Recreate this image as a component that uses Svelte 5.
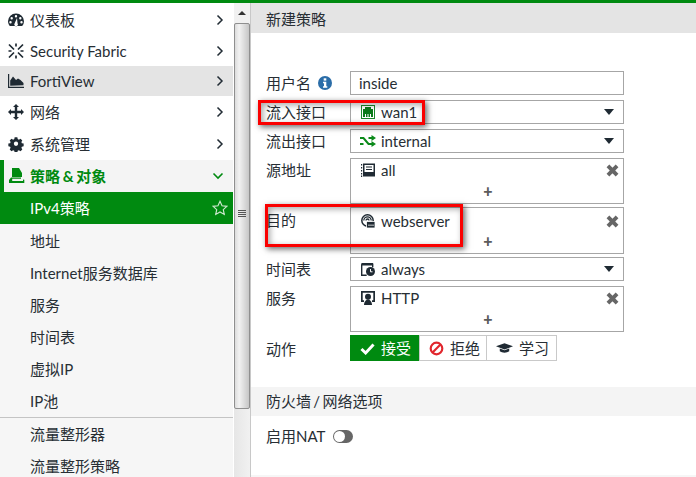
<script>
  const top = [
    { label: '仪表板', icon: 'gauge' },
    { label: 'Security Fabric', icon: 'fabric' },
    { label: 'FortiView', icon: 'chart', hover: true },
    { label: '网络', icon: 'move' },
    { label: '系统管理', icon: 'cog' }
  ];
  const sub1 = ['地址', 'Internet服务数据库', '服务', '时间表', '虚拟IP', 'IP池'];
  const sub2 = ['流量整形器', '流量整形策略'];
</script>

{#snippet menuIcon(name)}
  <svg class="micon" viewBox="0 0 16 16" width="16" height="16">
    {#if name === 'gauge'}
      <path fill="#1f2a33" fill-rule="evenodd" d="M8 1.500a7.800 7.800 0 0 0-8 7.700c0 1.900.7 3.500 1.800 4.800h12.400A7.300 7.300 0 0 0 16 9.200 7.800 7.800 0 0 0 8 1.500zM8 3a1.200 1.200 0 1 1 0 2.400A1.200 1.200 0 0 1 8 3zM3.700 5a1.200 1.200 0 1 1 0 2.400 1.200 1.200 0 0 1 0-2.400zm8.600 0a1.200 1.200 0 1 1 0 2.400 1.200 1.200 0 0 1 0-2.400zM2.500 9.100a1.200 1.200 0 1 1 0 2.400 1.200 1.200 0 0 1 0-2.400zm11 0a1.200 1.200 0 1 1 0 2.400 1.200 1.200 0 0 1 0-2.400zM9 6l.5 5.200a1.800 1.800 0 1 1-2.800 0z"/>
    {:else if name === 'fabric'}
      <path fill="none" stroke="#1f2a33" stroke-width="1.700" d="M1 1.500l5 5M15 1.500l-5 5M1 14.500l5-5M15 14.500l-5-5M8 .5v3M8 12.500v3M.5 8h3M12.500 8h3"/>
    {:else if name === 'chart'}
      <path fill="#1f2a33" d="M0 1h1.200v12.800H16V15H0z"/>
      <path fill="#1f2a33" d="M2.200 12.800V7.500L5 3.500l3 3.500 2-1.500 2.500 1.500 3 3v2.300z"/>
    {:else if name === 'move'}
      <path fill="#1f2a33" d="M8 0l3 3H9.200v3.800H13V5l3 3-3 3V9.200H9.200V13H11l-3 3-3-3h1.800V9.200H3V11L0 8l3-3v1.800h3.800V3H5z"/>
    {:else if name === 'cog'}
      <path fill="#1f2a33" fill-rule="evenodd" d="M6.500 1h3l.4 2 1.300.6 1.800-1.100 2 2-1 1.800.5 1.300 2 .4v3l-2 .4-.5 1.300 1 1.800-2 2-1.800-1.100-1.300.6-.4 2h-3l-.4-2-1.300-.6-1.800 1.100-2-2 1-1.800-.5-1.300-2-.4v-3l2-.4.5-1.300-1-1.800 2-2 1.800 1.100 1.300-.6zM8 5.800a2.400 2.400 0 1 0 0 4.800 2.400 2.400 0 0 0 0-4.800z" transform="translate(.8 .4) scale(.9)"/>
    {/if}
  </svg>
{/snippet}

{#snippet chevron()}
  <svg class="chev" viewBox="0 0 8 12" width="8" height="12"><path d="M1.500 1.500L6 6l-4.500 4.500" fill="none" stroke="#222c35" stroke-width="1.500"/></svg>
{/snippet}

{#snippet caret()}
  <span class="caret"></span>
{/snippet}

{#snippet cross()}
  <svg class="cross" viewBox="0 0 12 12" width="13" height="13"><path d="M1.800 1.800l8.400 8.400M10.200 1.800l-8.400 8.400" stroke="#666" stroke-width="3.600" fill="none"/></svg>
{/snippet}

<div class="page">
  <div class="topbar"></div>
  <div class="main">
    <nav class="side">
      {#each top as item, i}
        <div class="item" class:first={i === 0} class:slim={i === 1 || i === 2} class:hover={item.hover}>
          {@render menuIcon(item.icon)}
          <span class="lbl">{item.label}</span>
          {@render chevron()}
        </div>
      {/each}
      <div class="item group">
        <svg class="micon" viewBox="0 0 16 16" width="16" height="16">
          <path fill="#008a10" d="M3 0h7l3 5v4H3z"/>
          <path fill="#008a10" d="M2 9.500h10v1.200H3.200V13H14v-1.500l1.300.2V15H0v-3z"/>
        </svg>
        <span class="lbl">策略 &amp; 对象</span>
        <svg class="chev" viewBox="0 0 12 8" width="12" height="8"><path d="M1.500 1.500L6 6l4.500-4.500" fill="none" stroke="#008a10" stroke-width="1.600"/></svg>
      </div>
      <div class="item active">
        <span class="lbl">IPv4策略</span>
        <svg class="star" viewBox="0 0 18 18" width="16" height="16"><path d="M9 1.500l2.300 5 5.400.6-4 3.700 1.100 5.400L9 13.500l-4.800 2.700 1.100-5.400-4-3.700 5.400-.6z" fill="none" stroke="#cfe9d0" stroke-width="1.300"/></svg>
      </div>
      <div class="sub">
        {#each sub1 as s}<div class="subitem">{s}</div>{/each}
        <div class="divider"></div>
        {#each sub2 as s}<div class="subitem">{s}</div>{/each}
      </div>
    </nav>

    <div class="scroll">
      <div class="sb-up"><span></span></div>
      <div class="sb-thumb"><div class="grip"><i></i><i></i><i></i><i></i></div></div>
    </div>

    <section class="content">
      <header class="head">新建策略</header>
      <div class="form">
        <div class="row r-user">
          <div class="label">用户名
            <svg class="info" viewBox="0 0 14 14" width="14" height="14"><circle cx="7" cy="7" r="7" fill="#2b6da8"/><rect x="5.700" y="2.300" width="2.600" height="2.300" fill="#fff"/><path d="M5 5.800h3.300v4.400h1v1.500H5v-1.500h1V7.300H5z" fill="#fff"/></svg>
          </div>
          <div class="box single plain">inside</div>
        </div>
        <div class="row r-in">
          <div class="label">流入接口</div>
          <div class="box single">
            <svg class="ico" viewBox="0 0 14 14" width="14" height="14"><rect x=".5" y=".5" width="13" height="13" fill="#fff" stroke="#1c8a2a"/><path fill="#0b7a1a" d="M2 4h2V2h6v2h2v8H2z"/><path stroke="#fff" d="M4.500 9v3M7 9v3M9.500 9v3"/></svg>
            <span>wan1</span>{@render caret()}
          </div>
        </div>
        <div class="row r-out">
          <div class="label">流出接口</div>
          <div class="box single">
            <svg class="ico wide" viewBox="0 0 16 12" width="16" height="12"><path d="M0 3h3.500l5 6H12M0 9h3.500M8.500 3H12" fill="none" stroke="#0b8a1a" stroke-width="2"/><path d="M11.500 0L16 3l-4.500 3zM11.500 6L16 9l-4.500 3z" fill="#0b8a1a"/></svg>
            <span>internal</span>{@render caret()}
          </div>
        </div>
        <div class="row r-src">
          <div class="label top">源地址</div>
          <div class="box multi">
            <div class="entry">
              <svg class="ico" viewBox="0 0 14 14" width="14" height="14"><rect x="2" y=".5" width="12" height="13" fill="#1f2a33"/><path d="M0 1h1.200v1.500H0zM0 4h1.200v1.500H0zM0 7h1.200v1.500H0zM0 10h1.200v1.500H0zM0 12.500h1.200V14H0z" fill="#1f2a33"/><path d="M3.500 2h9v7h-9z" fill="#fff"/><path d="M5 3.500h6v1H5zM5 6h6v1H5z" fill="#1f2a33"/></svg>
              <span>all</span>{@render cross()}
            </div>
            <div class="plus">+</div>
          </div>
        </div>
        <div class="row r-dst">
          <div class="label top">目的</div>
          <div class="box multi">
            <div class="entry">
              <svg class="ico" viewBox="0 0 14 14" width="14" height="14"><circle cx="6.500" cy="6.500" r="5.700" fill="none" stroke="#1f2a33" stroke-width="1.500"/><path d="M2.800 6.500a3.700 3.700 0 0 1 7.400 0M5 6.500a1.500 1.500 0 0 1 3 0" fill="none" stroke="#1f2a33" stroke-width="1.300"/><rect x="5.500" y="7.500" width="8.500" height="6.500" fill="#1f2a33" stroke="#fff" stroke-width=".8"/><path d="M7.500 10.500h1V12h-1zM9.500 10.500h1V12h-1zM11.500 10.500h1V12h-1z" fill="#fff"/></svg>
              <span>webserver</span>{@render cross()}
            </div>
            <div class="plus">+</div>
          </div>
        </div>
        <div class="row r-time">
          <div class="label">时间表</div>
          <div class="box single">
            <svg class="ico" viewBox="0 0 14 14" width="14" height="14"><path d="M.7 2.200h11v3M.7 2.200v11h5" fill="none" stroke="#1f2a33" stroke-width="1.400"/><rect x=".5" y="1" width="11.500" height="2.500" fill="#1f2a33"/><circle cx="9.500" cy="9.500" r="4.500" fill="#1f2a33"/><path d="M9.500 7v2.800h2" fill="none" stroke="#fff"/></svg>
            <span>always</span>{@render caret()}
          </div>
        </div>
        <div class="row r-svc">
          <div class="label top">服务</div>
          <div class="box multi">
            <div class="entry">
              <svg class="ico" viewBox="0 0 14 14" width="14" height="14"><path fill="#1f2a33" fill-rule="evenodd" d="M0 0h14v11h-3V9.300h1.300V1.700H1.700v7.600H3V11H0z"/><circle cx="7" cy="5.800" r="3" fill="#1f2a33"/><path fill="#1f2a33" d="M3 14c0-3 1.800-5.500 4-5.500s4 2.500 4 5.500z"/></svg>
              <span>HTTP</span>{@render cross()}
            </div>
            <div class="plus">+</div>
          </div>
        </div>
        <div class="row r-act">
          <div class="label">动作</div>
          <div class="seg">
            <div class="btn on">
              <svg viewBox="0 0 16 14" width="15" height="13"><path d="M1.500 7.500l4.500 4.300L14.500 2.800" fill="none" stroke="#fff" stroke-width="3.200"/></svg>
              接受
            </div>
            <div class="btn deny">
              <svg viewBox="0 0 16 16" width="15" height="15"><circle cx="8" cy="8" r="6.200" fill="none" stroke="#e1262d" stroke-width="2.300"/><path d="M3.800 12.200l8.400-8.400" stroke="#e1262d" stroke-width="2.300"/></svg>
              拒绝
            </div>
            <div class="btn learn">
              <svg viewBox="0 0 18 12" width="17" height="12"><path d="M9 1L0 4.200 9 7.500l9-3.300z" fill="#1f2a33"/><path d="M4 6.500v3c2.500 2 7.500 2 10 0v-3L9 8.500z" fill="#1f2a33"/></svg>
              学习
            </div>
          </div>
        </div>
      </div>
      <div class="section">防火墙 / 网络选项</div>
      <div class="nat">
        <span>启用NAT</span>
        <span class="toggle"><i></i></span>
      </div>
      <div class="foot"></div>
    </section>
  </div>

  <div class="mark m1"></div>
  <div class="mark m2"></div>
</div>

<style>
  :global(body) { margin: 0; }
  .page {
    position: relative;
    width: 696px;
    height: 477px;
    overflow: hidden;
    background: #fff;
    color: #272e34;
    font: 15px/20px Lato, "Noto Sans CJK SC", sans-serif;
  }
  .topbar { height: 3px; background: #008a10; }
  .main { display: flex; height: 474px; }

  .side { width: 233px; flex: none; background: #fff; }
  .item {
    display: flex;
    align-items: center;
    height: 32px;
    padding: 0 9px 0 8px;
    box-sizing: border-box;
  }
  .item.first { height: 33px; }
  .item.slim { height: 30px; }
  .item.hover { background: #e4e4e4; }
  .micon { flex: none; margin-right: 6px; }
  .lbl { flex: 1; white-space: nowrap; }
  .chev { flex: none; }
  .item.group {
    background: #f4f4f4;
    border-left: 4px solid #008a10;
    padding-left: 5px;
    padding-right: 9px;
    color: #008a10;
    font-weight: 700;
    word-spacing: -1px;
  }
  .item.group .micon { margin-right: 5px; }
  .item.active {
    background: #008a10;
    color: #fff;
    padding-left: 30px;
    padding-right: 5px;
  }
  .sub { background: #f6f6f6; padding-top: 1px; height: 253px; box-sizing: border-box; }
  .subitem { height: 32px; line-height: 32px; padding-left: 30px; white-space: nowrap; }
  .divider { height: 1px; background: #c4c4c4; }

  .scroll {
    width: 16px;
    flex: none;
    background: linear-gradient(90deg, #e6e6e6, #f1f1f1);
    margin-left: 1px;
  }
  .sb-up { height: 20px; background: #f1f1f1; display: flex; align-items: center; justify-content: center; }
  .sb-up span { border: 4px solid transparent; border-bottom: 4px solid #333; border-top: 0; }
  .sb-thumb {
    height: 386px;
    box-sizing: border-box;
    border: 1px solid #8f8f8f;
    border-radius: 2px;
    background: linear-gradient(90deg, #dcdcdc, #f2f2f2 30%, #c6c6c6);
    display: flex;
    align-items: center;
    justify-content: center;
  }
  .grip { display: flex; flex-direction: column; gap: 1px; margin-top: -6px; }
  .grip i { display: block; width: 8px; height: 1px; background: #555; }

  .content {
    flex: 1;
    border-left: 1px solid #c8c8c8;
    display: flex;
    flex-direction: column;
    min-width: 0;
  }
  .head {
    height: 30px;
    line-height: 33px;
    background: #e4e4e4;
    padding-left: 15px;
    flex: none;
  }
  .form { padding: 38px 0 0 15px; }
  .row { display: flex; }
  .label {
    width: 84px;
    flex: none;
    display: flex;
    align-items: center;
    gap: 7px;
  }
  .label.top { align-items: flex-start; padding-top: 2px; }
  .box {
    width: 274px;
    box-sizing: border-box;
    border: 1px solid #a6a6a6;
    background: #fff;
  }
  .single {
    height: 24px;
    display: flex;
    align-items: center;
    padding: 0 10px;
    gap: 6px;
  }
  .single.plain { padding-left: 8px; }
  .single > span:not(.caret) { flex: 1; }
  .ico { flex: none; }
  .ico.wide { margin-right: -1px; margin-left: -1px; }
  .caret {
    border: 5px solid transparent;
    border-top: 6px solid #1f2a33;
    border-bottom: 0;
    margin-right: -1px;
  }
  .multi { padding: 1px 4px 0 10px; }
  .entry { display: flex; align-items: center; gap: 6px; height: 20px; }
  .entry > span { flex: 1; }
  .plus {
    text-align: center;
    font-weight: 900;
    font-size: 16px;
    color: #5c5c5c;
    line-height: 16px;
    margin-top: 3px;
    margin-left: -4px;
  }
  .r-in, .r-out, .r-src, .r-svc { margin-top: 5px; }
  .r-src .multi, .r-svc .multi { height: 46px; }
  .r-dst { margin-top: 3px; }
  .r-dst .multi { height: 47px; padding-top: 3px; }
  .r-dst .plus { margin-top: 2px; }
  .r-dst .label { padding-top: 3px; }
  .r-time { margin-top: 3px; }
  .r-act { margin-top: 3px; }
  .r-act .label { padding-top: 1px; }

  .seg { display: flex; height: 26px; }
  .btn {
    display: flex;
    align-items: center;
    gap: 6px;
    box-sizing: border-box;
    border: 1px solid #c9c9c9;
    border-left-width: 0;
    padding-left: 9px;
  }
  .btn.on { width: 69px; background: #008a10; color: #fff; border: 0; padding-left: 10px; }
  .btn.deny { width: 68px; border-left-width: 1px; }
  .btn.learn { width: 70px; }

  .section {
    margin-top: 26px;
    height: 29px;
    line-height: 29px;
    background: #f4f4f4;
    padding-left: 15px;
    flex: none;
    word-spacing: -1.500px;
  }
  .nat { display: flex; align-items: center; gap: 8px; padding: 10px 0 0 15px; height: 20px; }
  .toggle {
    width: 20px;
    height: 13px;
    border-radius: 7px;
    background: #666;
    position: relative;
    display: block;
  }
  .toggle i {
    position: absolute;
    left: 1px;
    top: 1px;
    width: 11px;
    height: 11px;
    border-radius: 50%;
    background: #fff;
  }
  .foot { margin-top: auto; height: 2px; background: #f6f6f6; }

  .mark {
    position: absolute;
    box-sizing: border-box;
    border: 3px solid #fa0000;
    box-shadow: 2px 2px 6px rgba(0, 0, 0, .6), inset 2px 2px 6px rgba(0, 0, 0, .35);
  }
  .m1 { left: 258px; top: 100px; width: 167px; height: 25px; }
  .m2 { left: 265px; top: 204px; width: 198px; height: 43px; }
</style>
